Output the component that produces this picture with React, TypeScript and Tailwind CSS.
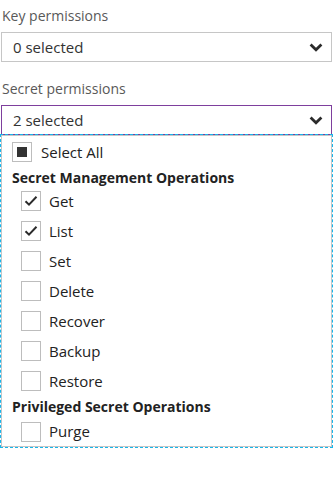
import React from 'react';

const font = { fontFamily: '"Segoe UI", "Open Sans", "Noto Sans", sans-serif' };

const Chevron = () => (
  <svg width="14" height="9" viewBox="0 0 14 9" className="shrink-0">
    <path d="M1.6 1.6 L7 6.8 L12.4 1.6" fill="none" stroke="#2b2b2b" strokeWidth="2.8" />
  </svg>
);

const Dropdown = ({ value, active }: { value: string; active?: boolean }) => (
  <div
    className={`ml-px w-[331px] h-[30px] flex items-center justify-between pl-[11px] pr-[8px] border bg-white text-[15px] text-[#333] ${
      active ? 'border-[#7e3f9d]' : 'border-[#c6c6c6]'
    }`}
  >
    <span>{value}</span>
    <Chevron />
  </div>
);

const Box = ({ state }: { state: 'checked' | 'empty' | 'partial' }) => (
  <span className="w-[20px] h-[20px] border border-[#bdbdbd] bg-white flex items-center justify-center shrink-0">
    {state === 'checked' && (
      <svg width="14" height="12" viewBox="0 0 14 12">
        <path d="M1.5 6.2 L5 9.6 L12.5 1.8" fill="none" stroke="#2b2b2b" strokeWidth="2" />
      </svg>
    )}
    {state === 'partial' && <span className="w-[10px] h-[10px] bg-[#333]" />}
  </span>
);

const Item = ({ label, checked, h = 'h-[30px]' }: { label: string; checked?: boolean; h?: string }) => (
  <div className={`${h} flex items-center gap-[8px] pl-[19px] text-[15px] text-[#222]`}>
    <Box state={checked ? 'checked' : 'empty'} />
    <span>{label}</span>
  </div>
);

const secretOps = [
  { label: 'Get', checked: true },
  { label: 'List', checked: true },
  { label: 'Set' },
  { label: 'Delete' },
  { label: 'Recover' },
  { label: 'Backup' },
  { label: 'Restore' },
];

const App: React.FC = () => {
  return (
    <div className="w-[333px] h-[498px] bg-white overflow-hidden" style={font}>
      <div className="h-[32px] pl-[2px] pb-[6px] flex items-end text-[14px] text-[#595959]">Key permissions</div>
      <Dropdown value="0 selected" />
      <div className="h-[43px] pl-[2px] pb-[6px] flex items-end text-[14px] text-[#595959]">Secret permissions</div>
      <Dropdown value="2 selected" active />
      <div className="w-[333px] -mt-px border border-dashed border-[#17b6ec]">
        <div className="border border-[#c6c6c6] bg-white">
          <div className="h-[32px] flex items-center gap-[9px] pl-[10px] text-[15px] text-[#222]">
            <Box state="partial" />
            <span>Select All</span>
          </div>
          <div className="h-[18px] flex items-center pl-[10px] text-[14px] font-bold text-[#222]">
            Secret Management Operations
          </div>
          {secretOps.map(op => (
            <Item key={op.label} label={op.label} checked={op.checked} />
          ))}
          <div className="h-[21px] flex items-center pl-[10px] text-[14px] font-bold text-[#222]">
            Privileged Secret Operations
          </div>
          <Item label="Purge" h="h-[29px]" />
        </div>
      </div>
    </div>
  );
};

export default App;
